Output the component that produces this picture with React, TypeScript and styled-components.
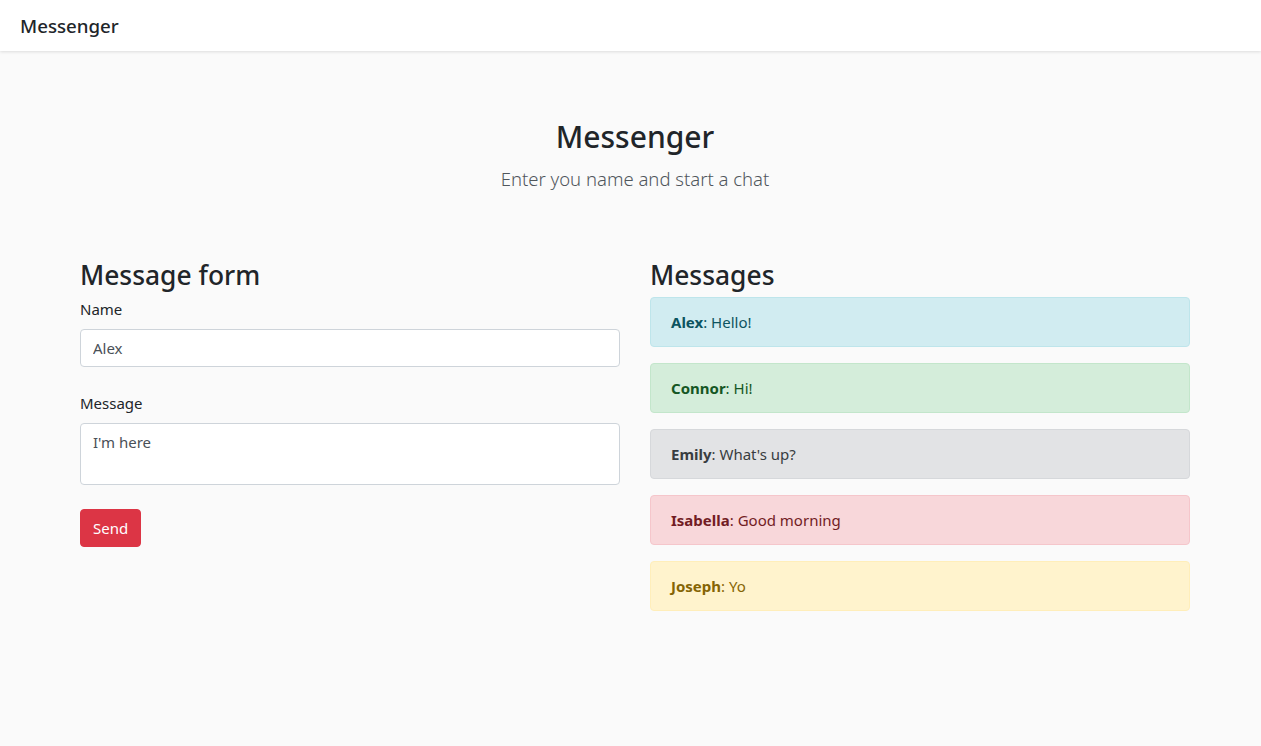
import React from "react";
import styled, { createGlobalStyle } from "styled-components";

const Global = createGlobalStyle`
  html, body { margin: 0; padding: 0; }
  body {
    background: #fafafa;
    font-family: "Noto Sans", "Open Sans", sans-serif;
    color: #212529;
    font-size: 15px;
    line-height: 24px;
  }
  * { box-sizing: border-box; }
`;

const Navbar = styled.nav`
  height: 51px;
  background: #ffffff;
  display: flex;
  align-items: center;
  padding: 0 20px;
  box-shadow: 0 1px 3px rgba(0, 0, 0, 0.12);
  position: relative;
`;

const Brand = styled.span`
  font-size: 18.7px;
  color: #212529;
  font-weight: 500;
`;

const Page = styled.div`
  padding-left: 9px;
`;

const Hero = styled.header`
  text-align: center;
  padding-top: 67px;
`;

const Title = styled.h1`
  margin: 0 0 8px;
  font-size: 30px;
  font-weight: 500;
  line-height: 38px;
`;

const Lead = styled.p`
  margin: 0;
  font-size: 18.5px;
  font-weight: 300;
  line-height: 30px;
  color: #50565c;
`;

const Columns = styled.main`
  display: grid;
  grid-template-columns: 540px 540px;
  column-gap: 30px;
  justify-content: center;
  margin-top: 64px;
`;

const Section = styled.section`
  display: flex;
  flex-direction: column;
`;

const SectionTitle = styled.h2`
  margin: 0 0 5px;
  font-size: 26.4px;
  font-weight: 500;
  line-height: 34px;
`;

const Field = styled.div`
  display: flex;
  flex-direction: column;
  margin-bottom: 24px;
`;

const Label = styled.label`
  margin-bottom: 8px;
  font-size: 15px;
`;

const Input = styled.input`
  height: 38px;
  padding: 6px 12px;
  font: inherit;
  font-size: 15px;
  color: #495057;
  background: #fff;
  border: 1px solid #ced4da;
  border-radius: 4px;
`;

const TextArea = styled.textarea`
  height: 62px;
  padding: 6px 12px;
  font: inherit;
  font-size: 15px;
  color: #495057;
  background: #fff;
  border: 1px solid #ced4da;
  border-radius: 4px;
  resize: none;
`;

const Button = styled.button`
  align-self: flex-start;
  height: 38px;
  width: 61px;
  padding: 6px 12px;
  font: inherit;
  font-size: 15px;
  color: #fff;
  background: #dc3545;
  border: 1px solid #dc3545;
  border-radius: 4px;
`;

type Variant = "info" | "success" | "secondary" | "danger" | "warning";
const palette: Record<Variant, [string, string, string]> = {
  info: ["#d1ecf1", "#bee5eb", "#0c5460"],
  success: ["#d4edda", "#c3e6cb", "#155724"],
  secondary: ["#e2e3e5", "#d6d8db", "#383d41"],
  danger: ["#f8d7da", "#f5c6cb", "#721c24"],
  warning: ["#fff3cd", "#ffeeba", "#856404"],
};

const Alert = styled.div<{ $v: Variant }>`
  padding: 12px 20px;
  margin-bottom: 16px;
  border-radius: 4px;
  background: ${(p) => palette[p.$v][0]};
  border: 1px solid ${(p) => palette[p.$v][1]};
  color: ${(p) => palette[p.$v][2]};
`;

const Author = styled.b`
  font-weight: 700;
`;

const messages: { name: string; text: string; v: Variant }[] = [
  { name: "Alex", text: "Hello!", v: "info" },
  { name: "Connor", text: "Hi!", v: "success" },
  { name: "Emily", text: "What's up?", v: "secondary" },
  { name: "Isabella", text: "Good morning", v: "danger" },
  { name: "Joseph", text: "Yo", v: "warning" },
];

export default function App() {
  return (
    <>
      <Global />
      <Navbar>
        <Brand>Messenger</Brand>
      </Navbar>
      <Page>
        <Hero>
          <Title>Messenger</Title>
          <Lead>Enter you name and start a chat</Lead>
        </Hero>
        <Columns>
          <Section>
            <SectionTitle>Message form</SectionTitle>
            <Field>
              <Label>Name</Label>
              <Input defaultValue="Alex" />
            </Field>
            <Field>
              <Label>Message</Label>
              <TextArea defaultValue="I'm here" />
            </Field>
            <Button>Send</Button>
          </Section>
          <Section>
            <SectionTitle>Messages</SectionTitle>
            {messages.map((m) => (
              <Alert key={m.name} $v={m.v}>
                <Author>{m.name}</Author>: {m.text}
              </Alert>
            ))}
          </Section>
        </Columns>
      </Page>
    </>
  );
}
